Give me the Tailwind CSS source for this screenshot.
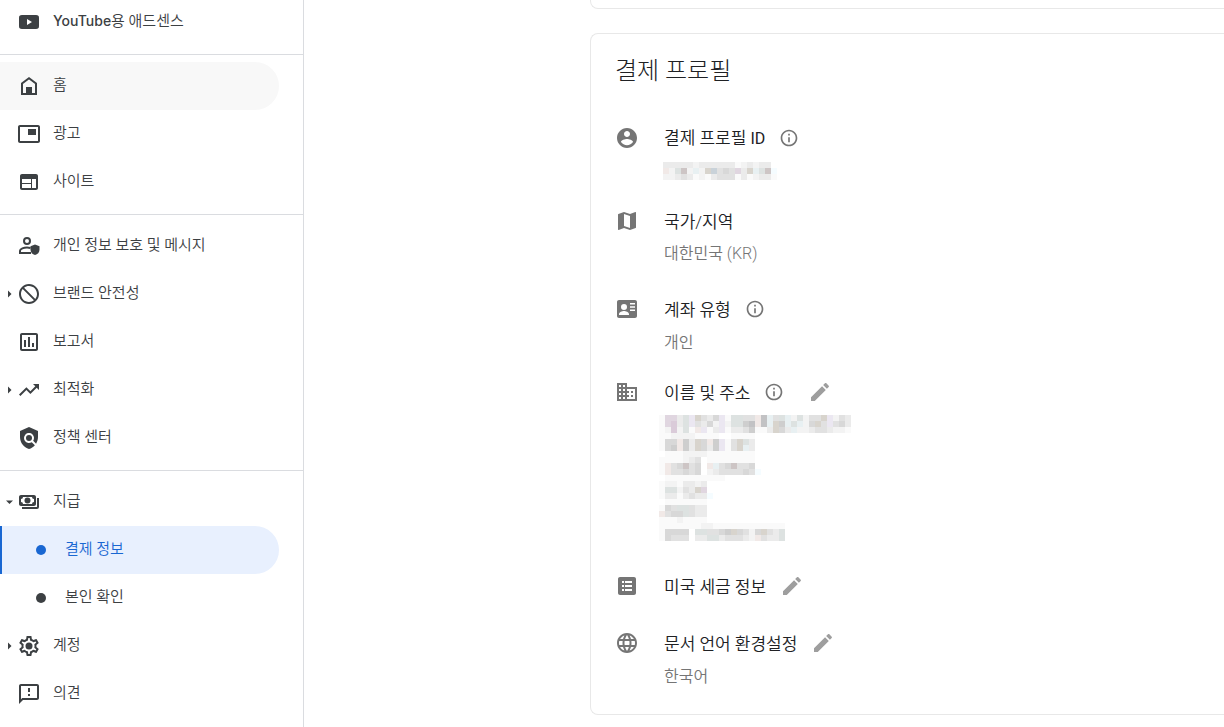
<!DOCTYPE html>
<html lang="ko">
<head>
    <meta charset="UTF-8">
    <meta name="viewport" content="width=device-width, initial-scale=1.0">
    <title>결제 정보</title>
    <script src="https://cdn.jsdelivr.net/npm/@tailwindcss/browser@4"></script>
</head>
<body class="flex h-screen overflow-hidden bg-white font-['Roboto','Noto_Sans_CJK_KR',sans-serif] font-[350] text-[#202124]">

<!-- Sidebar -->
<nav class="w-76 shrink-0 overflow-hidden border-r border-[#dadce0] text-[15px] leading-5 text-[#3c4043]">
    <ul class="-mt-0.5">
        <li>
            <a href="#" class="flex h-12 items-center pl-[17px]">
                <svg class="size-6 fill-current" viewBox="0 0 24 24"><path fill-rule="evenodd" d="M5 5h14c2.200 0 3 .8 3 3v8c0 2.200-.8 3-3 3H5c-2.200 0-3-.8-3-3V8c0-2.200.8-3 3-3zm5 4v6l5-3z"/></svg>
                <span class="ml-3 pb-0.5"><span class="font-['Inter'] text-sm font-medium">YouTube</span>용 애드센스</span>
            </a>
        </li>
    </ul>
    <hr class="mt-2 mb-[7px] border-[#dadce0]">
    <ul>
        <li>
            <a href="#" class="mr-6 flex h-12 items-center rounded-r-full bg-[#f8f8f8] pl-[17px]">
                <svg class="size-6" viewBox="0 0 24 24"><path d="M5 20V9.500L12 4.300l7 5.200V20z" fill="none" stroke="currentColor" stroke-width="2"/><path d="M9 13h6v7H9z" fill="currentColor"/></svg>
                <span class="ml-3 pb-0.5">홈</span>
            </a>
        </li>
        <li>
            <a href="#" class="mr-6 flex h-12 items-center pl-[17px]">
                <svg class="size-6 fill-current" viewBox="0 0 24 24"><path d="M19 7h-8v6h8V7zm2-4H3c-1.100 0-2 .9-2 2v14c0 1.100.9 1.980 2 1.980h18c1.100 0 2-.88 2-1.980V5c0-1.100-.9-2-2-2zm0 16.010H3V4.980h18v14.030z"/></svg>
                <span class="ml-3 pb-0.5">광고</span>
            </a>
        </li>
        <li>
            <a href="#" class="mr-6 flex h-12 items-center pl-[17px]">
                <svg class="size-6 fill-current" viewBox="0 0 24 24"><path fill-rule="evenodd" d="M5 4h14c1.100 0 2 .9 2 2v12c0 1.100-.9 2-2 2H5c-1.100 0-2-.9-2-2V6c0-1.100.9-2 2-2zm0 5v4h9V9zm0 5v4h9v-4zm10-5v9h4V9z"/></svg>
                <span class="ml-3 pb-0.5">사이트</span>
            </a>
        </li>
    </ul>
    <hr class="mt-2 mb-[7px] border-[#dadce0]">
    <ul>
        <li>
            <a href="#" class="mr-6 flex h-12 items-center pl-[17px]">
                <svg class="size-6" viewBox="0 0 24 24"><circle cx="10" cy="7" r="3" fill="none" stroke="currentColor" stroke-width="2"/><path d="M14 19H3v-2.200C3 14.700 7 13.500 10 13.500c1.200 0 2.300.2 3.500.5" fill="none" stroke="currentColor" stroke-width="2"/><path d="M18 10.500l4.500 1.700v3.500c0 2.600-1.900 4.700-4.500 5.300-2.600-.6-4.500-2.700-4.500-5.300v-3.500z" fill="currentColor"/></svg>
                <span class="ml-3 pb-0.5">개인 정보 보호 및 메시지</span>
            </a>
        </li>
        <li>
            <a href="#" class="mr-6 flex h-12 items-center pl-1.5">
                <svg class="h-2 w-[11px] fill-current" viewBox="0 0 11 8"><path d="M2 .5L5.500 4 2 7.500z"/></svg>
                <svg class="size-6 fill-current" viewBox="0 0 24 24"><path d="M12 2C6.480 2 2 6.480 2 12s4.480 10 10 10 10-4.480 10-10S17.520 2 12 2zM4 12c0-4.420 3.580-8 8-8 1.850 0 3.550.63 4.900 1.690L5.690 16.900C4.630 15.550 4 13.850 4 12zm8 8c-1.850 0-3.550-.63-4.900-1.690L18.310 7.100C19.370 8.450 20 10.150 20 12c0 4.420-3.580 8-8 8z" transform="matrix(-1 0 0 1 24 0)"/></svg>
                <span class="ml-3 pb-0.5">브랜드 안전성</span>
            </a>
        </li>
        <li>
            <a href="#" class="mr-6 flex h-12 items-center pl-[17px]">
                <svg class="size-6 fill-current" viewBox="0 0 24 24"><path d="M9 17H7v-7h2v7zm4 0h-2V7h2v10zm4 0h-2v-4h2v4zm2 2H5V5h14v14zm0-16H5c-1.100 0-2 .9-2 2v14c0 1.100.9 2 2 2h14c1.100 0 2-.9 2-2V5c0-1.100-.9-2-2-2z"/></svg>
                <span class="ml-3 pb-0.5">보고서</span>
            </a>
        </li>
        <li>
            <a href="#" class="mr-6 flex h-12 items-center pl-1.5">
                <svg class="h-2 w-[11px] fill-current" viewBox="0 0 11 8"><path d="M2 .5L5.500 4 2 7.500z"/></svg>
                <svg class="size-6 fill-current" viewBox="0 0 24 24"><path d="M16 6l2.290 2.290-4.880 4.880-4-4L2 16.590 3.410 18l6-6 4 4 6.300-6.290L22 12V6z"/></svg>
                <span class="ml-3 pb-0.5">최적화</span>
            </a>
        </li>
        <li>
            <a href="#" class="mr-6 flex h-12 items-center pl-[17px]">
                <svg class="size-6 fill-current" viewBox="0 0 24 24"><path d="M21 5l-9-4-9 4v6c0 5.550 3.840 10.740 9 12 2.300-.56 4.330-1.900 5.880-3.710l-3.120-3.120c-1.940 1.290-4.580 1.070-6.290-.64-1.950-1.950-1.950-5.120 0-7.070 1.950-1.950 5.120-1.950 7.070 0 1.710 1.710 1.920 4.350.64 6.290l2.900 2.900C20.290 15.690 21 13.380 21 11V5z"/><circle cx="12" cy="12" r="3"/></svg>
                <span class="ml-3 pb-0.5">정책 센터</span>
            </a>
        </li>
    </ul>
    <hr class="mt-2 mb-[7px] border-[#dadce0]">
    <ul>
        <li>
            <a href="#" class="mr-6 flex h-12 items-center pl-1.5">
                <svg class="h-2 w-[11px] fill-current" viewBox="0 0 11 8"><path d="M0 2.500h7L3.500 6z"/></svg>
                <svg class="size-6" viewBox="0 0 24 24"><path fill="currentColor" fill-rule="evenodd" d="M4 5h13c1.100 0 2 .9 2 2v7c0 1.100-.9 2-2 2H4c-1.100 0-2-.9-2-2V7c0-1.100.9-2 2-2zm2 2a2 2 0 0 1-2 2v3a2 2 0 0 1 2 2h9a2 2 0 0 1 2-2V9a2 2 0 0 1-2-2z"/><circle cx="10.500" cy="10.500" r="3" fill="currentColor"/><path d="M21 8v9c0 .6-.4 1-1 1H5" fill="none" stroke="currentColor" stroke-width="2"/></svg>
                <span class="ml-3 pb-0.5">지급</span>
            </a>
            <ul>
                <li>
                    <a href="#" aria-current="page" class="mr-6 flex h-12 items-center rounded-r-full border-l-2 border-[#1967d2] bg-[#e8f0fe] pl-[34px] text-[#1967d2]">
                        <span class="size-2.5 rounded-full bg-[#1967d2]"></span>
                        <span class="ml-[19px] pb-0.5">결제 정보</span>
                    </a>
                </li>
                <li>
                    <a href="#" class="mr-6 flex h-12 items-center pl-9">
                        <span class="size-2.5 rounded-full bg-[#3c4043]"></span>
                        <span class="ml-[19px] pb-0.5">본인 확인</span>
                    </a>
                </li>
            </ul>
        </li>
        <li>
            <a href="#" class="mr-6 flex h-12 items-center pl-1.5">
                <svg class="h-2 w-[11px] fill-current" viewBox="0 0 11 8"><path d="M2 .5L5.500 4 2 7.500z"/></svg>
                <svg class="size-6 fill-current" viewBox="0 0 24 24"><path d="M19.430 12.980c.04-.32.07-.64.07-.98s-.03-.66-.07-.98l2.110-1.650c.19-.15.24-.42.12-.64l-2-3.460c-.09-.16-.26-.25-.44-.25-.06 0-.12.01-.17.03l-2.490 1c-.52-.4-1.080-.73-1.690-.98l-.38-2.650C14.460 2.180 14.250 2 14 2h-4c-.25 0-.46.18-.49.42l-.38 2.650c-.61.25-1.170.59-1.690.98l-2.490-1c-.06-.02-.12-.03-.18-.03-.17 0-.34.09-.43.25l-2 3.460c-.13.22-.07.49.12.64l2.110 1.650c-.04.32-.07.65-.07.98s.03.66.07.98l-2.110 1.650c-.19.15-.24.42-.12.64l2 3.460c.09.16.26.25.44.25.06 0 .12-.01.17-.03l2.490-1c.52.4 1.080.73 1.690.98l.38 2.650c.03.24.24.42.49.42h4c.25 0 .46-.18.49-.42l.38-2.650c.61-.25 1.170-.59 1.690-.98l2.490 1c.06.02.12.03.18.03.17 0 .34-.09.43-.25l2-3.460c.12-.22.07-.49-.12-.64l-2.110-1.650zm-1.980-1.710c.04.31.05.52.05.73 0 .21-.02.43-.05.73l-.14 1.130.89.7 1.080.84-.7 1.210-1.270-.51-1.040-.42-.9.680c-.43.32-.84.56-1.250.73l-1.060.43-.16 1.130-.2 1.350h-1.400l-.19-1.350-.16-1.130-1.060-.43c-.43-.18-.83-.41-1.230-.71l-.91-.7-1.060.43-1.270.51-.7-1.210 1.080-.84.89-.7-.14-1.130c-.03-.31-.05-.54-.05-.74s.02-.43.05-.73l.14-1.130-.89-.7-1.080-.84.7-1.210 1.270.51 1.040.42.9-.68c.43-.32.84-.56 1.250-.73l1.060-.43.16-1.130.2-1.350h1.390l.19 1.350.16 1.130 1.060.43c.43.18.83.41 1.230.71l.91.7 1.060-.43 1.270-.51.7 1.210-1.070.85-.89.7.14 1.130z"/><circle cx="12" cy="12" r="3.500"/></svg>
                <span class="ml-3 pb-0.5">계정</span>
            </a>
        </li>
        <li>
            <a href="#" class="mr-6 flex h-12 items-center pl-[17px]">
                <svg class="size-6 fill-current" viewBox="0 0 24 24"><path d="M20 2H4c-1.100 0-1.990.9-1.990 2L2 22l4-4h14c1.100 0 2-.9 2-2V4c0-1.100-.9-2-2-2zm0 14H5.170L4 17.170V4h16v12zM11 12h2v2h-2zm0-6h2v4h-2z"/></svg>
                <span class="ml-3 pb-0.5">의견</span>
            </a>
        </li>
    </ul>
</nav>

<!-- Payment settings -->
<main class="min-w-0 flex-1 overflow-hidden pl-[286px]">
    <div class="h-[9px] rounded-bl-lg border-b border-l border-[#e8e8e8]"></div>

    <section class="mt-6 rounded-l-lg border-y border-l border-[#e8e8e8] pt-[21px] pb-[25px] pl-6">
        <h1 class="text-2xl leading-8 font-light">결제 프로필</h1>

        <div class="mt-[39px] mb-[29px] flex gap-[25px]">
            <svg class="size-6 shrink-0 fill-[#757575]" viewBox="0 0 24 24"><path d="M12 2C6.480 2 2 6.480 2 12s4.480 10 10 10 10-4.480 10-10S17.520 2 12 2zm0 3c1.660 0 3 1.340 3 3s-1.340 3-3 3-3-1.340-3-3 1.340-3 3-3zm0 14.200c-2.500 0-4.710-1.280-6-3.220.03-1.990 4-3.080 6-3.080 1.990 0 5.970 1.090 6 3.080-1.290 1.940-3.500 3.220-6 3.220z"/></svg>
            <div>
                <div class="flex h-6 items-center gap-3.5">
                    <h2 class="pt-px text-[17px] leading-6">결제 프로필 <span class="text-base font-normal">ID</span></h2>
                    <button aria-label="정보"><svg class="size-5 fill-[#757575]" viewBox="0 0 24 24"><path d="M11 17h2v-6h-2v6zm1-15C6.480 2 2 6.480 2 12s4.480 10 10 10 10-4.480 10-10S17.520 2 12 2zm0 18c-4.410 0-8-3.590-8-8s3.590-8 8-8 8 3.590 8 8-3.590 8-8 8zM11 9h2V7h-2v2z"/></svg></button>
                </div>
                <svg id="profile-id" class="mt-3 -ml-px block"></svg>
            </div>
        </div>

        <div class="mb-[31px] flex gap-[25px]">
            <svg class="size-6 shrink-0 fill-[#757575]" viewBox="0 0 24 24"><path d="M20.500 3l-.16.03L15 5.100 9 3 3.360 4.900c-.21.07-.36.25-.36.48V20.500c0 .28.22.5.5.5l.16-.03L9 18.900l6 2.100 5.640-1.900c.21-.07.36-.25.36-.48V3.500c0-.28-.22-.5-.5-.5zM15 19l-6-2.110V5l6 2.110V19z"/></svg>
            <div>
                <h2 class="pt-px text-[17px] leading-6">국가/지역</h2>
                <p class="mt-2 text-base leading-6 text-[#757575]">대한민국 (KR)</p>
            </div>
        </div>

        <div class="mb-[25px] flex gap-[25px]">
            <svg class="size-6 shrink-0 fill-[#757575]" viewBox="0 0 24 24"><path fill-rule="evenodd" d="M4 3h16c1.100 0 2 .9 2 2v14c0 1.100-.9 2-2 2H4c-1.100 0-2-.9-2-2V5c0-1.100.9-2 2-2zm5 4a3 3 0 1 0 0 6 3 3 0 0 0 0-6zm-5 11h10v-1c0-2-3.300-3.100-5-3.100S4 15 4 17zM15 6v1.500h5V6zm0 3.200v1.500h5V9.200zm0 3.200v1.500h5v-1.500z"/></svg>
            <div>
                <div class="flex h-6 items-center gap-3.5">
                    <h2 class="pt-px text-[17px] leading-6">계좌 유형</h2>
                    <button aria-label="정보"><svg class="size-5 fill-[#757575]" viewBox="0 0 24 24"><path d="M11 17h2v-6h-2v6zm1-15C6.480 2 2 6.480 2 12s4.480 10 10 10 10-4.480 10-10S17.520 2 12 2zm0 18c-4.410 0-8-3.590-8-8s3.590-8 8-8 8 3.590 8 8-3.590 8-8 8zM11 9h2V7h-2v2z"/></svg></button>
                </div>
                <p class="mt-2.5 text-base leading-6 text-[#757575]">개인</p>
            </div>
        </div>

        <div class="mb-[33px] flex gap-[25px]">
            <svg class="size-6 shrink-0 fill-[#757575]" viewBox="0 0 24 24"><path d="M12 7V3H2v18h20V7H12zM6 19H4v-2h2v2zm0-4H4v-2h2v2zm0-4H4V9h2v2zm0-4H4V5h2v2zm4 12H8v-2h2v2zm0-4H8v-2h2v2zm0-4H8V9h2v2zm0-4H8V5h2v2zm10 12h-8v-2h2v-2h-2v-2h2v-2h-2V9h8v10zm-2-8h-2v2h2v-2zm0 4h-2v2h2v-2z"/></svg>
            <div>
                <div class="flex h-6 items-center gap-3.5">
                    <h2 class="pt-px text-[17px] leading-6">이름 및 주소</h2>
                    <button aria-label="정보"><svg class="size-5 fill-[#757575]" viewBox="0 0 24 24"><path d="M11 17h2v-6h-2v6zm1-15C6.480 2 2 6.480 2 12s4.480 10 10 10 10-4.480 10-10S17.520 2 12 2zm0 18c-4.410 0-8-3.590-8-8s3.590-8 8-8 8 3.590 8 8-3.590 8-8 8zM11 9h2V7h-2v2z"/></svg></button>
                    <button class="ml-2.5" aria-label="수정"><svg class="size-6 fill-[#9e9e9e]" viewBox="0 0 24 24"><path d="M3 17.250V21h3.750L17.810 9.940l-3.750-3.750L3 17.250zM20.710 7.040c.39-.39.39-1.020 0-1.410l-2.340-2.340c-.39-.39-1.020-.39-1.410 0l-1.830 1.830 3.750 3.750 1.830-1.830z"/></svg></button>
                </div>
                <svg id="address" class="mt-[11px] -ml-[5px] block"></svg>
            </div>
        </div>

        <div class="mb-[33px] flex gap-[25px]">
            <svg class="size-6 shrink-0 fill-[#757575]" viewBox="0 0 24 24"><path fill-rule="evenodd" d="M5 3h14c1.100 0 2 .9 2 2v14c0 1.100-.9 2-2 2H5c-1.100 0-2-.9-2-2V5c0-1.100.9-2 2-2zm2 4v2h2V7zm3 0v2h7V7zm-3 4v2h2v-2zm3 0v2h7v-2zm-3 4v2h2v-2zm3 0v2h7v-2z"/></svg>
            <div class="flex h-6 items-center gap-3.5">
                <h2 class="pt-px text-[17px] leading-6">미국 세금 정보</h2>
                <button aria-label="수정"><svg class="size-6 fill-[#9e9e9e]" viewBox="0 0 24 24"><path d="M3 17.250V21h3.750L17.810 9.940l-3.750-3.750L3 17.250zM20.710 7.040c.39-.39.39-1.020 0-1.410l-2.340-2.340c-.39-.39-1.020-.39-1.410 0l-1.830 1.830 3.750 3.750 1.830-1.830z"/></svg></button>
            </div>
        </div>

        <div class="flex gap-[25px]">
            <svg class="size-6 shrink-0 fill-[#757575]" viewBox="0 0 24 24"><path d="M11.990 2C6.470 2 2 6.480 2 12s4.470 10 9.990 10C17.520 22 22 17.520 22 12S17.520 2 11.990 2zm6.930 6h-2.950c-.32-1.250-.78-2.450-1.380-3.560 1.840.63 3.370 1.910 4.330 3.560zM12 4.040c.83 1.200 1.480 2.530 1.910 3.960h-3.820c.43-1.430 1.080-2.760 1.910-3.960zM4.260 14C4.100 13.360 4 12.690 4 12s.1-1.360.26-2h3.380c-.08.66-.14 1.320-.14 2s.06 1.340.14 2H4.260zm.82 2h2.950c.32 1.250.78 2.450 1.380 3.560-1.840-.63-3.370-1.900-4.330-3.560zm2.950-8H5.080c.96-1.660 2.490-2.930 4.330-3.560C8.810 5.550 8.350 6.750 8.030 8zM12 19.960c-.83-1.200-1.480-2.530-1.910-3.960h3.820c-.43 1.430-1.080 2.760-1.910 3.960zM14.340 14H9.660c-.09-.66-.16-1.320-.16-2s.07-1.350.16-2h4.680c.09.65.16 1.320.16 2s-.07 1.340-.16 2zm.25 5.560c.6-1.110 1.060-2.310 1.380-3.560h2.950c-.96 1.650-2.490 2.930-4.330 3.560zM16.360 14c.08-.66.14-1.320.14-2s-.06-1.340-.14-2h3.380c.16.64.26 1.310.26 2s-.1 1.360-.26 2h-3.380z"/></svg>
            <div>
                <div class="flex h-6 items-center gap-3.5">
                    <h2 class="pt-px text-[17px] leading-6">문서 언어 환경설정</h2>
                    <button aria-label="수정"><svg class="size-6 fill-[#9e9e9e]" viewBox="0 0 24 24"><path d="M3 17.250V21h3.750L17.810 9.940l-3.750-3.750L3 17.250zM20.710 7.040c.39-.39.39-1.020 0-1.410l-2.340-2.340c-.39-.39-1.020-.39-1.410 0l-1.830 1.830 3.750 3.750 1.830-1.830z"/></svg></button>
                </div>
                <p class="mt-2.5 text-base leading-6 text-[#757575]">한국어</p>
            </div>
        </div>
    </section>
</main>

<script>
    // Masked personal data: one letter per 6px block, "." is empty
    const colors = {
        a: "#fafafa", b: "#f3f3f3", c: "#ebebeb", d: "#e1e1e1", e: "#d8d8d8", f: "#cecece", g: "#c2c2c4",
        p: "#e0d6e0", q: "#dacbd9", t: "#dde2e1", u: "#ebe7f1", v: "#e8f0f2", w: "#f1e9e7", x: "#d8d4cd",
        y: "#cdc5c5", z: "#c9d2d9", s: "#f5fcff",
    };

    function drawMask(id, rows) {
        const size = 6;
        const svg = document.getElementById(id);
        svg.setAttribute("width", Math.max(...rows.map((row) => row.length)) * size);
        svg.setAttribute("height", rows.length * size);
        svg.setAttribute("shape-rendering", "crispEdges");
        svg.innerHTML = rows.map((row, y) => [...row].map((key, x) =>
            key === "." ? "" : `<rect x="${x * size}" y="${y * size}" width="${size}" height="${size}" fill="${colors[key]}"/>`
        ).join("")).join("");
    }

    drawMask("profile-id", [
        "cccccbccccccabcbcc",
        "wbtybvbxzdedpcxvtys",
        "bbcdcabacdddacabcca",
    ]);

    drawMask("address", [
        "appctuxdceuattddwgvdtvbtbddxubdc",
        "apqctudcebubttfgwgvxfvtvbexdudec",
        "abqbtawuacuaccdfaacxecvbbcddcbba",
        "aabbbbaaaa..aaaa",
        "aeewfcxewfuadxtc",
        "aefwfcxecfuadxvc",
        ".aaabbbbaaaaaaaa",
        "aaaabcd.aaaaaaaa",
        "awdeyde.wvdeydde",
        "awddede.bcddddeds",
        ".aaaaaaaaaa",
        "abbaccbc",
        "attbdcxp",
        "accacdccs",
        ".aaaaaaa",
        "aedttdcc",
        "wdeetdcc",
        "aaabaaaa",
        "aaaaaaabbaaaaaaaaaaaa",
        "aeeee.ttddefxedbexdct",
        "aeddd.ccttcdddcbwdcct",
    ]);
</script>
</body>
</html>
